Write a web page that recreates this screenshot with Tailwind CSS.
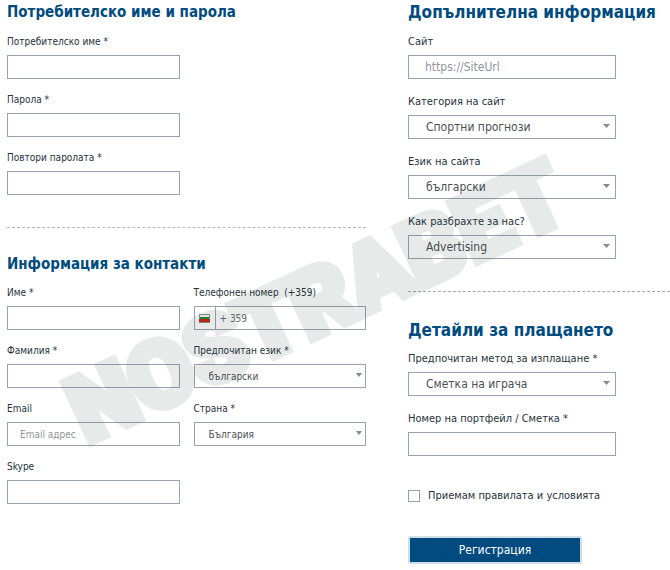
<!DOCTYPE html>
<html lang="bg">

<head>
    <title>Регистрация</title>
    <meta charset="utf-8">
    <meta name="viewport" content="width=device-width, initial-scale=1.0">
    <script src="https://cdn.jsdelivr.net/npm/@tailwindcss/browser@4"></script>
</head>

<body class="bg-white font-['DejaVu_Sans_Condensed','DejaVu_Sans',sans-serif] text-[#26323c]">
    <form class="relative grid grid-cols-[minmax(0,359fr)_minmax(0,262fr)] gap-[42px] pl-[7px] pb-1 overflow-hidden">
        <!-- Left column -->
        <div class="text-[10px]">
            <h2 class="text-[15px] leading-6 font-bold text-[#004b80] mb-2 whitespace-nowrap">Потребителско име и парола</h2>
            <div class="grid grid-cols-2 gap-x-3.5 gap-y-[11px]">
                <div class="col-start-1">
                    <label for="username" class="block leading-5 mb-[3px]">Потребителско име *</label>
                    <input type="text" id="username" class="block w-full h-6 border border-[#9aa3ad] px-3" required>
                </div>
                <div class="col-start-1">
                    <label for="password" class="block leading-5 mb-[3px]">Парола *</label>
                    <input type="password" id="password" class="block w-full h-6 border border-[#9aa3ad] px-3" required>
                </div>
                <div class="col-start-1">
                    <label for="password2" class="block leading-5 mb-[3px]">Повтори паролата *</label>
                    <input type="password" id="password2" class="block w-full h-6 border border-[#9aa3ad] px-3" required>
                </div>
            </div>

            <hr class="mt-8 border-t border-dashed border-[#b4b8bc]">

            <h2 class="text-[15px] leading-6 font-bold text-[#004b80] mt-6 mb-[7px] whitespace-nowrap">Информация за контакти</h2>
            <div class="grid grid-cols-2 gap-x-3.5 gap-y-[11px]">
                <div>
                    <label for="firstname" class="block leading-5 mb-[3px]">Име *</label>
                    <input type="text" id="firstname" class="block w-full h-6 border border-[#9aa3ad] px-3" required>
                </div>
                <div>
                    <label for="phone" class="block leading-5 mb-[3px] whitespace-pre">Телефонен номер  (+359)</label>
                    <div class="flex h-6 border border-[#9aa3ad]">
                        <span class="flex items-center justify-center w-[21px] border-r border-[#9aa3ad]">
                            <svg width="11" height="9" viewBox="0 0 11 9">
                                <rect width="11" height="9" fill="#8d9296" />
                                <rect x="1" y="1" width="9" height="2" fill="#f4f4f4" />
                                <rect x="1" y="3" width="9" height="2" fill="#1f8a2c" />
                                <rect x="0" y="5" width="11" height="3" fill="#c9241b" />
                            </svg>
                        </span>
                        <input type="tel" id="phone" placeholder="+ 359" class="flex-1 min-w-0 px-1 placeholder:text-[#646b71]">
                    </div>
                </div>
                <div>
                    <label for="lastname" class="block leading-5 mb-[3px]">Фамилия *</label>
                    <input type="text" id="lastname" class="block w-full h-6 border border-[#9aa3ad] px-3" required>
                </div>
                <div>
                    <label for="language" class="block leading-5 mb-[3px]">Предпочитан език *</label>
                    <div class="relative">
                        <select id="language" class="block appearance-none w-full h-6 border border-[#9aa3ad] pl-3.5 text-[10px] text-[#4a4f54]">
                            <option>български</option>
                        </select>
                        <svg class="absolute right-1 top-[9px] pointer-events-none" width="6" height="4" viewBox="0 0 6 4"><path d="M0 0h6L3 4z" fill="#858a8f" /></svg>
                    </div>
                </div>
                <div>
                    <label for="email" class="block leading-5 mb-[3px]">Email</label>
                    <input type="email" id="email" placeholder="Email адрес" class="block w-full h-6 border border-[#9aa3ad] px-3 placeholder:text-[#8f969c]">
                </div>
                <div>
                    <label for="country" class="block leading-5 mb-[3px]">Страна *</label>
                    <div class="relative">
                        <select id="country" class="block appearance-none w-full h-6 border border-[#9aa3ad] pl-3.5 text-[10px] text-[#4a4f54]">
                            <option>България</option>
                        </select>
                        <svg class="absolute right-1 top-[9px] pointer-events-none" width="6" height="4" viewBox="0 0 6 4"><path d="M0 0h6L3 4z" fill="#858a8f" /></svg>
                    </div>
                </div>
                <div>
                    <label for="skype" class="block leading-5 mb-[3px]">Skype</label>
                    <input type="text" id="skype" class="block w-full h-6 border border-[#9aa3ad] px-3">
                </div>
            </div>
        </div>

        <!-- Right column -->
        <div class="text-[11px]">
            <h2 class="text-[17px] leading-6 font-bold text-[#004b80] mb-2 whitespace-nowrap">Допълнителна информация</h2>
            <div class="grid gap-[13px] max-w-52">
                <div>
                    <label for="site" class="block leading-5 mb-[3px]">Сайт</label>
                    <input type="url" id="site" placeholder="https://SiteUrl" class="block w-full h-6 border border-[#9aa3ad] px-4 text-[12px] placeholder:text-[#8f969c]">
                </div>
                <div>
                    <label for="category" class="block leading-5 mb-[3px]">Категория на сайт</label>
                    <div class="relative">
                        <select id="category" class="block appearance-none w-full h-6 border border-[#9aa3ad] pl-[17px] text-[12px] text-[#4a4f54]">
                            <option>Спортни прогнози</option>
                        </select>
                        <svg class="absolute right-1.5 top-[9px] pointer-events-none" width="7" height="4" viewBox="0 0 7 4"><path d="M0 0h7L3.5 4z" fill="#858a8f" /></svg>
                    </div>
                </div>
                <div>
                    <label for="sitelang" class="block leading-5 mb-[3px]">Език на сайта</label>
                    <div class="relative">
                        <select id="sitelang" class="block appearance-none w-full h-6 border border-[#9aa3ad] pl-[17px] text-[12px] text-[#4a4f54]">
                            <option>български</option>
                        </select>
                        <svg class="absolute right-1.5 top-[9px] pointer-events-none" width="7" height="4" viewBox="0 0 7 4"><path d="M0 0h7L3.5 4z" fill="#858a8f" /></svg>
                    </div>
                </div>
                <div>
                    <label for="source" class="block leading-5 mb-[3px]">Как разбрахте за нас?</label>
                    <div class="relative">
                        <select id="source" class="block appearance-none w-full h-6 border border-[#9aa3ad] pl-[17px] text-[12px] text-[#4a4f54]">
                            <option>Advertising</option>
                        </select>
                        <svg class="absolute right-1.5 top-[9px] pointer-events-none" width="7" height="4" viewBox="0 0 7 4"><path d="M0 0h7L3.5 4z" fill="#858a8f" /></svg>
                    </div>
                </div>
            </div>

            <hr class="mt-8 border-t border-dashed border-[#a4a8ac]">

            <h2 class="text-[17px] leading-6 font-bold text-[#004b80] mt-[26px] mb-[7px] whitespace-nowrap">Детайли за плащането</h2>
            <div class="grid gap-[13px] max-w-52">
                <div>
                    <label for="method" class="block leading-5 mb-[3px] whitespace-nowrap">Предпочитан метод за изплащане *</label>
                    <div class="relative">
                        <select id="method" class="block appearance-none w-full h-6 border border-[#9aa3ad] pl-[17px] text-[12px] text-[#4a4f54]">
                            <option>Сметка на играча</option>
                        </select>
                        <svg class="absolute right-1.5 top-[9px] pointer-events-none" width="7" height="4" viewBox="0 0 7 4"><path d="M0 0h7L3.5 4z" fill="#858a8f" /></svg>
                    </div>
                </div>
                <div>
                    <label for="wallet" class="block leading-5 mb-[3px] whitespace-nowrap">Номер на портфейл / Сметка *</label>
                    <input type="text" id="wallet" class="block w-full h-6 border border-[#9aa3ad] px-4" required>
                </div>
            </div>

            <div class="flex items-center gap-2 mt-[30px]">
                <input type="checkbox" id="terms" class="appearance-none size-3 border border-[#9aa3ad] checked:bg-[#004b80]">
                <label for="terms" class="leading-5 whitespace-nowrap">Приемам правилата и условията</label>
            </div>

            <button type="button" class="block w-full max-w-[174px] h-7 mt-[30px] border-2 border-[#cfdfea] rounded-xs bg-[#004b80] bg-[repeating-linear-gradient(135deg,transparent_0_11px,#00416f_11px_12px)] text-[12px] text-white cursor-pointer">Регистрация</button>
        </div>

        <!-- Watermark -->
        <svg class="absolute left-0 top-0 pointer-events-none" width="670" height="570" viewBox="0 0 670 570" aria-hidden="true">
            <text transform="translate(87 444) rotate(-25)" font-family="Roboto, sans-serif" font-weight="900" font-size="92" fill="#1e3c32" stroke="#1e3c32" stroke-width="8" opacity="0.1">NOSTRABET</text>
        </svg>
    </form>
</body>

</html>
